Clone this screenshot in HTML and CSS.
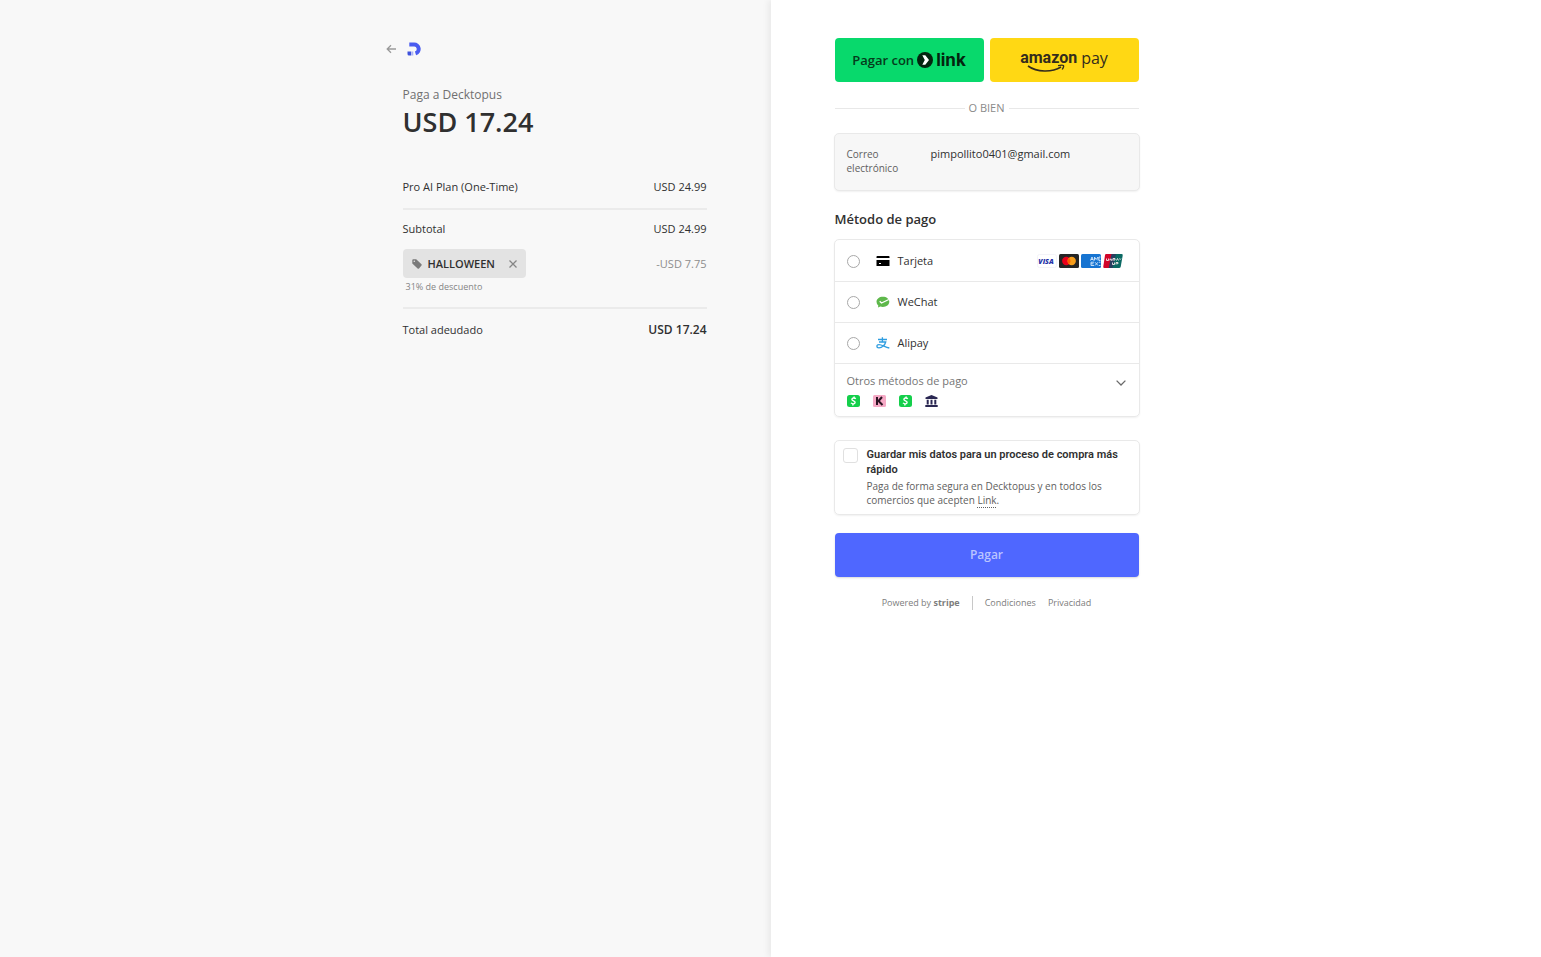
FILE: index.html
```html
<!DOCTYPE html>
<html lang="es">
<head>
<meta charset="utf-8">
<meta name="viewport" content="width=device-width, initial-scale=1">
<title>Decktopus</title>
<link rel="stylesheet" href="styles.css">
</head>
<body>
<main class="checkout">
  <section class="pane summary">
    <div class="column">
      <header class="brand">
        <a class="back" href="#" aria-label="Volver"><svg width="11" height="10" viewBox="0 0 11 10" fill="none" stroke="#9a9a9a" stroke-width="1.3"><path d="M10 5H1.500M5 1.200L1.200 5L5 8.800"/></svg></a>
        <svg class="logo" width="14" height="14" viewBox="0 0 14 14"><path d="M2.300 2.500H7A4.500 4.500 0 0 1 8.500 11.300" fill="none" stroke="#4a5cf0" stroke-width="4"/><path d="M.5 9.500H4.300V13.500H2A1.500 1.500 0 0 1 .5 12Z" fill="#3f52dc"/><path d="M4.800 9.500H6.300V13.500H4.800Z" fill="#aab3fa"/></svg>
      </header>
      <p class="payee">Paga a Decktopus</p>
      <h1 class="amount">USD 17.24</h1>
      <div class="line item"><span>Pro AI Plan (One-Time)</span><span>USD 24.99</span></div>
      <div class="line subtotal"><span>Subtotal</span><span>USD 24.99</span></div>
      <div class="line discount">
        <span class="coupon">
          <svg width="10" height="10" viewBox="0 0 10 10"><path d="M.3 1.200Q.3.300 1.200.3H4.200L9.500 5.200Q10 5.800 9.500 6.400L7 9.400Q6.300 10 5.600 9.400L.3 4.400Z" fill="#7a7a7a"/><circle cx="2.300" cy="2.300" r=".8" fill="#e3e3e3"/></svg>
          HALLOWEEN
          <button class="remove" type="button" aria-label="Quitar HALLOWEEN"><svg width="8" height="8" viewBox="0 0 8 8" stroke="#858585" stroke-width="1.300"><path d="M.5.5L7.500 7.500M7.500.5L.5 7.500"/></svg></button>
        </span>
        <span class="muted">-USD 7.75</span>
      </div>
      <p class="note">31% de descuento</p>
      <div class="line total"><span>Total adeudado</span><span class="sum">USD 17.24</span></div>
    </div>
  </section>

  <section class="pane payment">
    <form class="column">
      <div class="wallets">
        <button class="wallet link-pay" type="button">Pagar con
          <svg width="16" height="16" viewBox="0 0 16 16"><circle cx="8" cy="8" r="8" fill="#04240f"/><path d="M5.300 3.300H8.300L12 8L8.300 12.700H5.300L7.800 8Z" fill="#fff"/></svg>
          <b class="link-word">link</b></button>
        <button class="wallet amazon" type="button"><span class="amazon-name"><b>amazon</b><svg class="smile" width="39" height="10" viewBox="0 0 39 10" fill="none" stroke="#332c1d"><path d="M1 2C10 8.500 25 8.500 34 3" stroke-width="1.600"/><path d="M31 1.600C37 .5 38 1 35.200 5.500" stroke-width="1.400"/></svg></span> pay</button>
      </div>
      <div class="divider">O BIEN</div>
      <dl class="box email"><dt>Correo electrónico</dt><dd>pimpollito0401@gmail.com</dd></dl>
      <h2 class="heading">Método de pago</h2>
      <div class="box methods">
        <label class="method"><input class="radio" type="radio" name="method">
          <svg class="icon" width="14" height="12" viewBox="0 0 14 12"><path d="M1.300 1H12.700Q13.500 1 13.500 1.800V3H.5V1.800Q.5 1 1.300 1ZM.5 5H13.500V11H.5Z"/><path d="M3 8H5V9H3Z" fill="#fff"/></svg>
          Tarjeta
          <span class="cards">
            <svg width="20" height="14" viewBox="0 0 20 14"><rect x=".5" y=".5" width="19" height="13" rx="2" fill="#fff" stroke="#f3f3f8"/><text x="9" y="10" text-anchor="middle" class="visa">VISA</text></svg>
            <svg width="20" height="14" viewBox="0 0 20 14"><rect width="20" height="14" rx="1.500" fill="#252525"/><circle cx="7.300" cy="7" r="4.200" fill="#eb001b"/><circle cx="12.700" cy="7" r="4.200" fill="#f79e1b"/><path d="M10 3.800A4.200 4.200 0 0 1 10 10.200A4.200 4.200 0 0 1 10 3.800" fill="#ff5f00"/></svg>
            <svg width="20" height="14" viewBox="0 0 20 14"><rect width="20" height="14" rx="1.500" fill="#1774d1"/><path d="M9.500 6.500L11 3L12.500 6.500M10 5.500H12M13.500 6.500V3L15.200 5.500L17 3V6.500M19.500 3H18V6.500H19.500M13 8.200H10V11.500H13M10 9.800H12.500M14 8.200L17 11.500M17 8.200L14 11.500M18 8.200H19.500M18 11.500H19.500" fill="none" stroke="#d5e8fb" stroke-width=".9"/></svg>
            <svg width="20" height="14" viewBox="0 0 20 14"><path d="M3 0H10L7.200 14H1.500Q0 14 .3 12.500L2 1.200Q2.200 0 3 0Z" fill="#d10429"/><path d="M8.500 0H14L11 14H5.700Z" fill="#2a3f60"/><path d="M13 0H18.500Q20 0 19.700 1.500L17.700 12.700Q17.500 14 16 14H9.500Z" fill="#0b6963"/><path d="M3.500 4.500V6.500H5.500V4.500M7 6.500V4.800L8.800 6.500V4.800M10 6.500V4.500H12V6H10.500M13.500 6.500L14.500 4.500L15.500 6.500M16.500 4.500L17.200 5.500L18 4.500M9.500 8.500V10.500H11.500V8.500M13 10.500V8.500H15V9.700H13.500" fill="none" stroke="#f2e8ea" stroke-width=".9"/></svg>
          </span>
        </label>
        <label class="method"><input class="radio" type="radio" name="method">
          <svg class="icon" width="14" height="12" viewBox="0 0 14 12"><path d="M6.800.7C10.500.7 13.300 2.800 13.300 5.800S10.500 11 6.800 11Q5.500 11 4.300 10.600L2 11.500L2.300 9.500Q.5 8 .5 5.800C.5 2.800 3.300.7 6.800.7Z" fill="#5eb84b"/><path d="M3.700 5.200L5.500 7L12.800 3.500" fill="none" stroke="#fff" stroke-width="1.300"/></svg>
          WeChat</label>
        <label class="method"><input class="radio" type="radio" name="method">
          <svg class="icon" width="14" height="12" viewBox="0 0 14 12" fill="none" stroke="#2f9de0" stroke-width="1.300"><path d="M2 2.500H11M6.400.3V5M3 5H9.700C9 8 6 10.800 3 10.800C.3 10.800.2 7.600 3 7.600C6 7.600 8.500 9.800 13.300 11"/></svg>
          Alipay</label>
        <button class="others" type="button">
          <span class="others-title">Otros métodos de pago
            <svg class="chevron" width="10" height="6" viewBox="0 0 10 6" fill="none" stroke="#6a6a6a" stroke-width="1.300"><path d="M.6.6L5 5L9.400.6"/></svg></span>
          <span class="others-icons">
            <svg width="13" height="12" viewBox="0 0 13 12"><rect width="13" height="12" rx="2.500" fill="#14cf4b"/><path d="M8.800 3.800C7.500 2.500 4.900 2.900 4.900 4.400C4.900 6 8.300 5.600 8.100 7.500C7.900 9.200 5.200 9.200 4 7.900M7.200 1.500L7 2.700M6 9.100L5.800 10.500" fill="none" stroke="#fff" stroke-width="1.400"/></svg>
            <svg width="13" height="12" viewBox="0 0 13 12"><rect width="13" height="12" rx="1.500" fill="#f5a9c5"/><path d="M4 2V10M9 2L5.500 6L9.500 10" fill="none" stroke="#2a1322" stroke-width="2"/></svg>
            <svg width="13" height="12" viewBox="0 0 13 12"><rect width="13" height="12" rx="2.500" fill="#14cf4b"/><path d="M8.800 3.800C7.500 2.500 4.900 2.900 4.900 4.400C4.900 6 8.300 5.600 8.100 7.500C7.900 9.200 5.200 9.200 4 7.900M7.200 1.500L7 2.700M6 9.100L5.800 10.500" fill="none" stroke="#fff" stroke-width="1.400"/></svg>
            <svg width="13" height="12" viewBox="0 0 13 12" fill="#2a2752"><path d="M6.500 0L12.500 2.600V4H.5V2.600ZM1.700 4.800H3.700V9.500H1.700ZM5.500 4.800H7.500V9.500H5.500ZM9.300 4.800H11.300V9.500H9.300ZM.3 10H12.700V12H.3Z"/></svg>
          </span>
        </button>
      </div>
      <div class="box save">
        <input class="tick" type="checkbox" id="save">
        <div>
          <label class="save-title" for="save">Guardar mis datos para un proceso de compra más rápido</label>
          <p class="save-text">Paga de forma segura en Decktopus y en todos los comercios que acepten <a href="#">Link</a>.</p>
        </div>
      </div>
      <button class="pay" type="submit">Pagar</button>
      <footer class="footer">
        <span class="powered">Powered by <b>stripe</b></span>
        <a href="#">Condiciones</a>
        <a href="#">Privacidad</a>
      </footer>
    </form>
  </section>
</main>
</body>
</html>
```
FILE: styles.css
```css
* { box-sizing: border-box; }
body, h1, h2, p, dl, dd { margin: 0; }
body { font-family: "Open Sans", "Noto Sans", sans-serif; font-size: 11px; line-height: 20px; color: #303030; background: #fff; }
button { font: inherit; color: inherit; border: 0; padding: 0; background: none; cursor: pointer; }
a { color: inherit; text-decoration: none; }
svg { display: block; flex: none; }

.checkout { display: grid; grid-template-columns: 1fr 1fr; min-height: 100vh; }
.pane { display: flex; padding: 38px 64px; }
.summary { justify-content: flex-end; background: #f8f8f8; }
.payment { background: #fff; box-shadow: -3px 0 6px rgba(0, 0, 0, .06); }
.column { width: 100%; max-width: 304px; }

.brand { display: flex; align-items: center; gap: 10px; height: 22px; margin: 0 0 25px -17px; }
.payee { font-size: 12px; color: #707070; }
.amount { font-size: 27px; line-height: 34px; font-weight: 600; margin-bottom: 38px; }
.line { display: flex; align-items: center; justify-content: space-between; }
.item { padding-bottom: 11px; border-bottom: 2px solid #ebebeb; }
.subtotal { padding: 9px 0 10px; }
.coupon { display: flex; align-items: center; gap: 6px; height: 29px; padding: 0 9px; border-radius: 4px; background: #e3e3e3; font-weight: 600; }
.remove { margin-left: 8px; }
.muted { color: #8d8d8d; }
.note { padding: 0 3px 12px; font-size: 9px; line-height: 17px; color: #858585; border-bottom: 2px solid #ebebeb; }
.total { padding-top: 11px; }
.sum { font-size: 12px; font-weight: 600; }

.wallets { display: grid; grid-template-columns: 1fr 1fr; gap: 6px; }
.wallet { display: flex; align-items: center; justify-content: center; gap: 4px; height: 44px; border-radius: 4px; white-space: nowrap; }
.link-pay { gap: 3px; background: #08d96c; color: #053b1b; font-size: 13px; font-weight: 600; }
.link-word { font: 700 17px Inter, sans-serif; color: #04240f; }
.amazon { background: #ffd814; color: #332c1d; font-size: 16px; padding-bottom: 4px; }
.amazon-name { position: relative; font-family: Roboto, sans-serif; }
.smile { position: absolute; left: 7px; top: 16px; }
.divider { display: flex; align-items: center; gap: 4px; margin: 16px 0 15px; color: #8a8a8a; }
.divider::before, .divider::after { content: ""; flex: 1; height: 1px; background: #e8e8e8; }

.box { margin: 0 -1px; border: 1px solid #e9e9e9; border-radius: 5px; box-shadow: 0 1px 2px rgba(0, 0, 0, .06); }
.email { display: grid; grid-template-columns: 72px 1fr; gap: 12px; min-height: 58px; padding: 12px; background: #f7f7f7; line-height: 16px; }
.email dt { padding-top: 1px; font-size: 10px; line-height: 14px; color: #606060; }
.heading { margin: 18px 0 10px; font-size: 13px; line-height: 20px; font-weight: 600; }

.methods { padding-top: 1px; }
.method { display: flex; align-items: center; height: 41px; padding: 0 16px 0 12px; border-bottom: 1px solid #e9e9e9; }
.radio { appearance: none; width: 13px; height: 13px; margin: 0 16px 0 0; border: 1px solid #a8a8a8; border-radius: 50%; background: #fff; }
.icon { margin-right: 8px; }
.cards { display: flex; gap: 2px; margin-left: auto; }
.visa { font: italic 800 7px "Open Sans", sans-serif; fill: #2530a8; }
.others { display: block; width: 100%; padding: 7px 13px 9px 12px; text-align: left; color: #757575; }
.others-title { display: flex; align-items: center; justify-content: space-between; }
.chevron { margin-top: 4px; }
.others-icons { display: flex; gap: 13px; padding-top: 4px; }

.save { display: flex; align-items: flex-start; gap: 9px; margin-top: 23px; padding: 6px 4px 7px 8px; }
.tick { appearance: none; flex: none; width: 15px; height: 15px; margin: 1px 0 0; border: 1px solid #e0e0e0; border-radius: 3px; background: #fff; }
.save-title { display: block; font-family: Roboto, sans-serif; line-height: 15px; font-weight: 600; }
.save-text { margin-top: 2px; padding-right: 16px; font-size: 10px; line-height: 14px; color: #606060; }
.save-text a { text-decoration: underline dotted; text-underline-offset: 3px; }
.pay { display: block; width: 100%; height: 44px; margin-top: 18px; border-radius: 4px; background: #4f67ff; color: #bac4ff; font-size: 12px; font-weight: 600; box-shadow: 0 1px 2px rgba(0, 0, 0, .15); }
.footer { display: flex; justify-content: center; gap: 12px; margin-top: 19px; font-size: 9px; line-height: 14px; color: #7d7d7d; }
.powered { padding-right: 12px; border-right: 1px solid #c8c8c8; }
```
